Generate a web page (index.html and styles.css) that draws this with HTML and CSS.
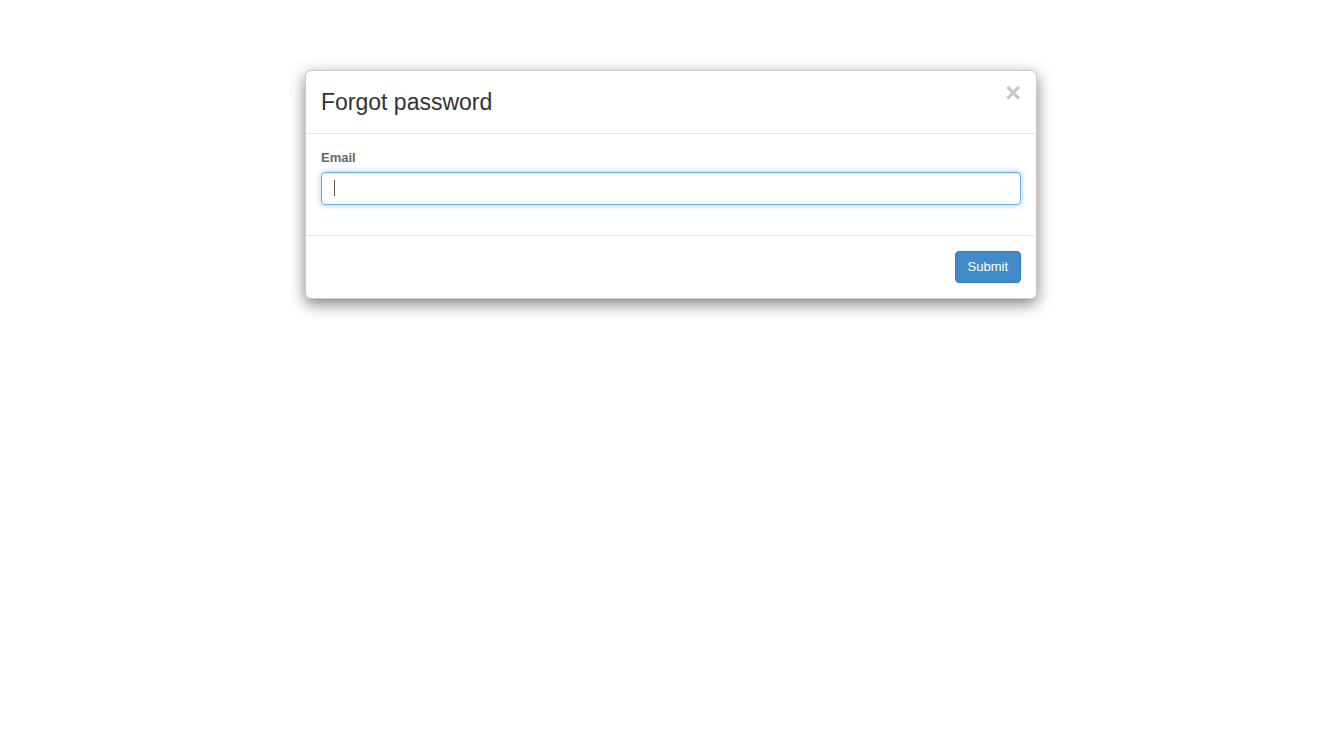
FILE: index.html
```html
<!DOCTYPE html>
<html>
<head>
<meta charset="utf-8">
<link rel="stylesheet" href="styles.css">
</head>
<body>
<div class="modal-dialog">
  <div class="modal-content">
    <div class="modal-header">
      <button class="close" type="button">×</button>
      <h4 class="modal-title">Forgot password</h4>
    </div>
    <div class="modal-body">
      <div class="form-group">
        <label class="control-label" for="email">Email</label>
        <div class="input-wrap">
          <input class="form-control focused" id="email" type="text">
          <span class="caret"></span>
        </div>
      </div>
    </div>
    <div class="modal-footer">
      <button class="btn btn-primary" type="button">Submit</button>
    </div>
  </div>
</div>
</body>
</html>
```
FILE: styles.css
```css
* { box-sizing: border-box; }
html { background: #fff; }
body {
  margin: 0;
  padding: 0 0 40px;
  font-family: "Liberation Sans", Arial, Helvetica, sans-serif;
  font-size: 13px;
  line-height: 1.42857;
  color: #333;
}
.modal-dialog {
  width: 732px;
  margin: 70px auto 0;
}
.modal-content {
  position: relative;
  background: #fff;
  border: 1px solid rgba(0,0,0,.2);
  border-radius: 6px;
  box-shadow: 0 5px 15px rgba(0,0,0,.5);
}
.modal-header {
  padding: 15px;
  border-bottom: 1px solid #e5e5e5;
  display: flex;
  flex-direction: row-reverse;
  justify-content: space-between;
  align-items: flex-start;
}
.modal-title {
  margin: 0;
  font-size: 23px;
  font-weight: 400;
  line-height: 32px;
  color: #333;
}
.close {
  padding: 0;
  margin-top: -6px;
  margin-right: 0;
  background: transparent;
  border: 0;
  font-family: "Liberation Sans", Arial, sans-serif;
  font-size: 27px;
  font-weight: 700;
  line-height: 1;
  color: #000;
  opacity: .22;
  cursor: pointer;
}
.modal-body { padding: 15px; }
.form-group { margin-bottom: 15px; }
.control-label {
  display: block;
  margin-bottom: 4px;
  font-weight: 700;
  color: #666;
}
.input-wrap { position: relative; }
.form-control {
  display: block;
  width: 100%;
  height: 33px;
  padding: 6px 12px;
  font-family: inherit;
  font-size: 13px;
  color: #555;
  background: #fff;
  border: 1px solid #ccc;
  border-radius: 4px;
  outline: 0;
}
.form-control.focused, .form-control:focus {
  border-color: #66afe9;
  box-shadow: inset 0 1px 1px rgba(0,0,0,.075), 0 0 6px rgba(102,175,233,.6);
}
.caret {
  position: absolute;
  left: 13px;
  top: 8px;
  width: 1px;
  height: 16px;
  background: #555;
}
.modal-footer {
  padding: 15px;
  border-top: 1px solid #e5e5e5;
  display: flex;
  justify-content: flex-end;
}
.btn {
  font-family: inherit;
  font-size: 13px;
  line-height: 1.42857;
  padding: 6px 12px;
  border: 1px solid transparent;
  border-radius: 4px;
  cursor: pointer;
}
.btn-primary {
  color: #fff;
  background: #428bca;
  border-color: #357ebd;
}
```
